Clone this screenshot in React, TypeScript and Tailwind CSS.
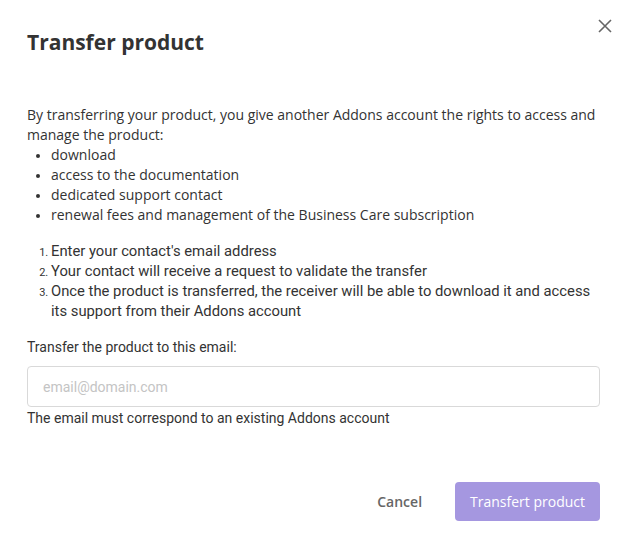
export default function App() {
  return (
    <div className="w-[629px] h-[536px] bg-white relative font-['Open_Sans',sans-serif] text-[#333]">
      <button className="absolute right-[16px] top-[18px] w-[16px] h-[16px] text-[#666]" aria-label="Close">
        <svg viewBox="0 0 16 16" width="16" height="16" fill="none" stroke="currentColor" strokeWidth="1.6">
          <path d="M2 2 L14 14 M14 2 L2 14" />
        </svg>
      </button>

      <div className="pl-[27px] pr-[29px] pt-[28px]">
        <h2 className="text-[21px] leading-[28px] font-bold text-[#333]">Transfer product</h2>

        <div className="mt-[49px] text-[14px] leading-[20px]">
          <p>
            By transferring your product, you give another Addons account the rights to access and manage the product:
          </p>
          <ul className="list-disc pl-[24px] marker:text-[12px]">
            <li>download</li>
            <li>access to the documentation</li>
            <li>dedicated support contact</li>
            <li>renewal fees and management of the Business Care subscription</li>
          </ul>
        </div>

        <ol className="mt-[16px] list-decimal pl-[24px] text-[14.8px] leading-[20px] font-['Roboto',sans-serif] marker:text-[11px]">
          <li>Enter your contact's email address</li>
          <li>Your contact will receive a request to validate the transfer</li>
          <li>
            Once the product is transferred, the receiver will be able to download it and access its support from their Addons account
          </li>
        </ol>

        <label className="block mt-[16px] text-[14px] leading-[20px] font-['Roboto',sans-serif]">
          Transfer the product to this email:
        </label>
        <input
          type="email"
          placeholder="email@domain.com"
          className="mt-[9px] w-full h-[41px] border border-[#d9d9d9] rounded-[4px] px-[15px] text-[14px] font-['Roboto',sans-serif] placeholder:text-[#c4c4c4] outline-none"
        />
        <p className="mt-[1px] text-[14px] leading-[20px] font-['Roboto',sans-serif]">
          The email must correspond to an existing Addons account
        </p>

        <div className="mt-[54px] flex justify-end items-center gap-[27px]">
          <button className="text-[14px] font-semibold text-[#666] px-[6px]">Cancel</button>
          <button className="h-[39px] px-[15px] rounded-[4px] bg-[#a597e0] text-white text-[14px] font-medium">
            Transfert product
          </button>
        </div>
      </div>
    </div>
  );
}
